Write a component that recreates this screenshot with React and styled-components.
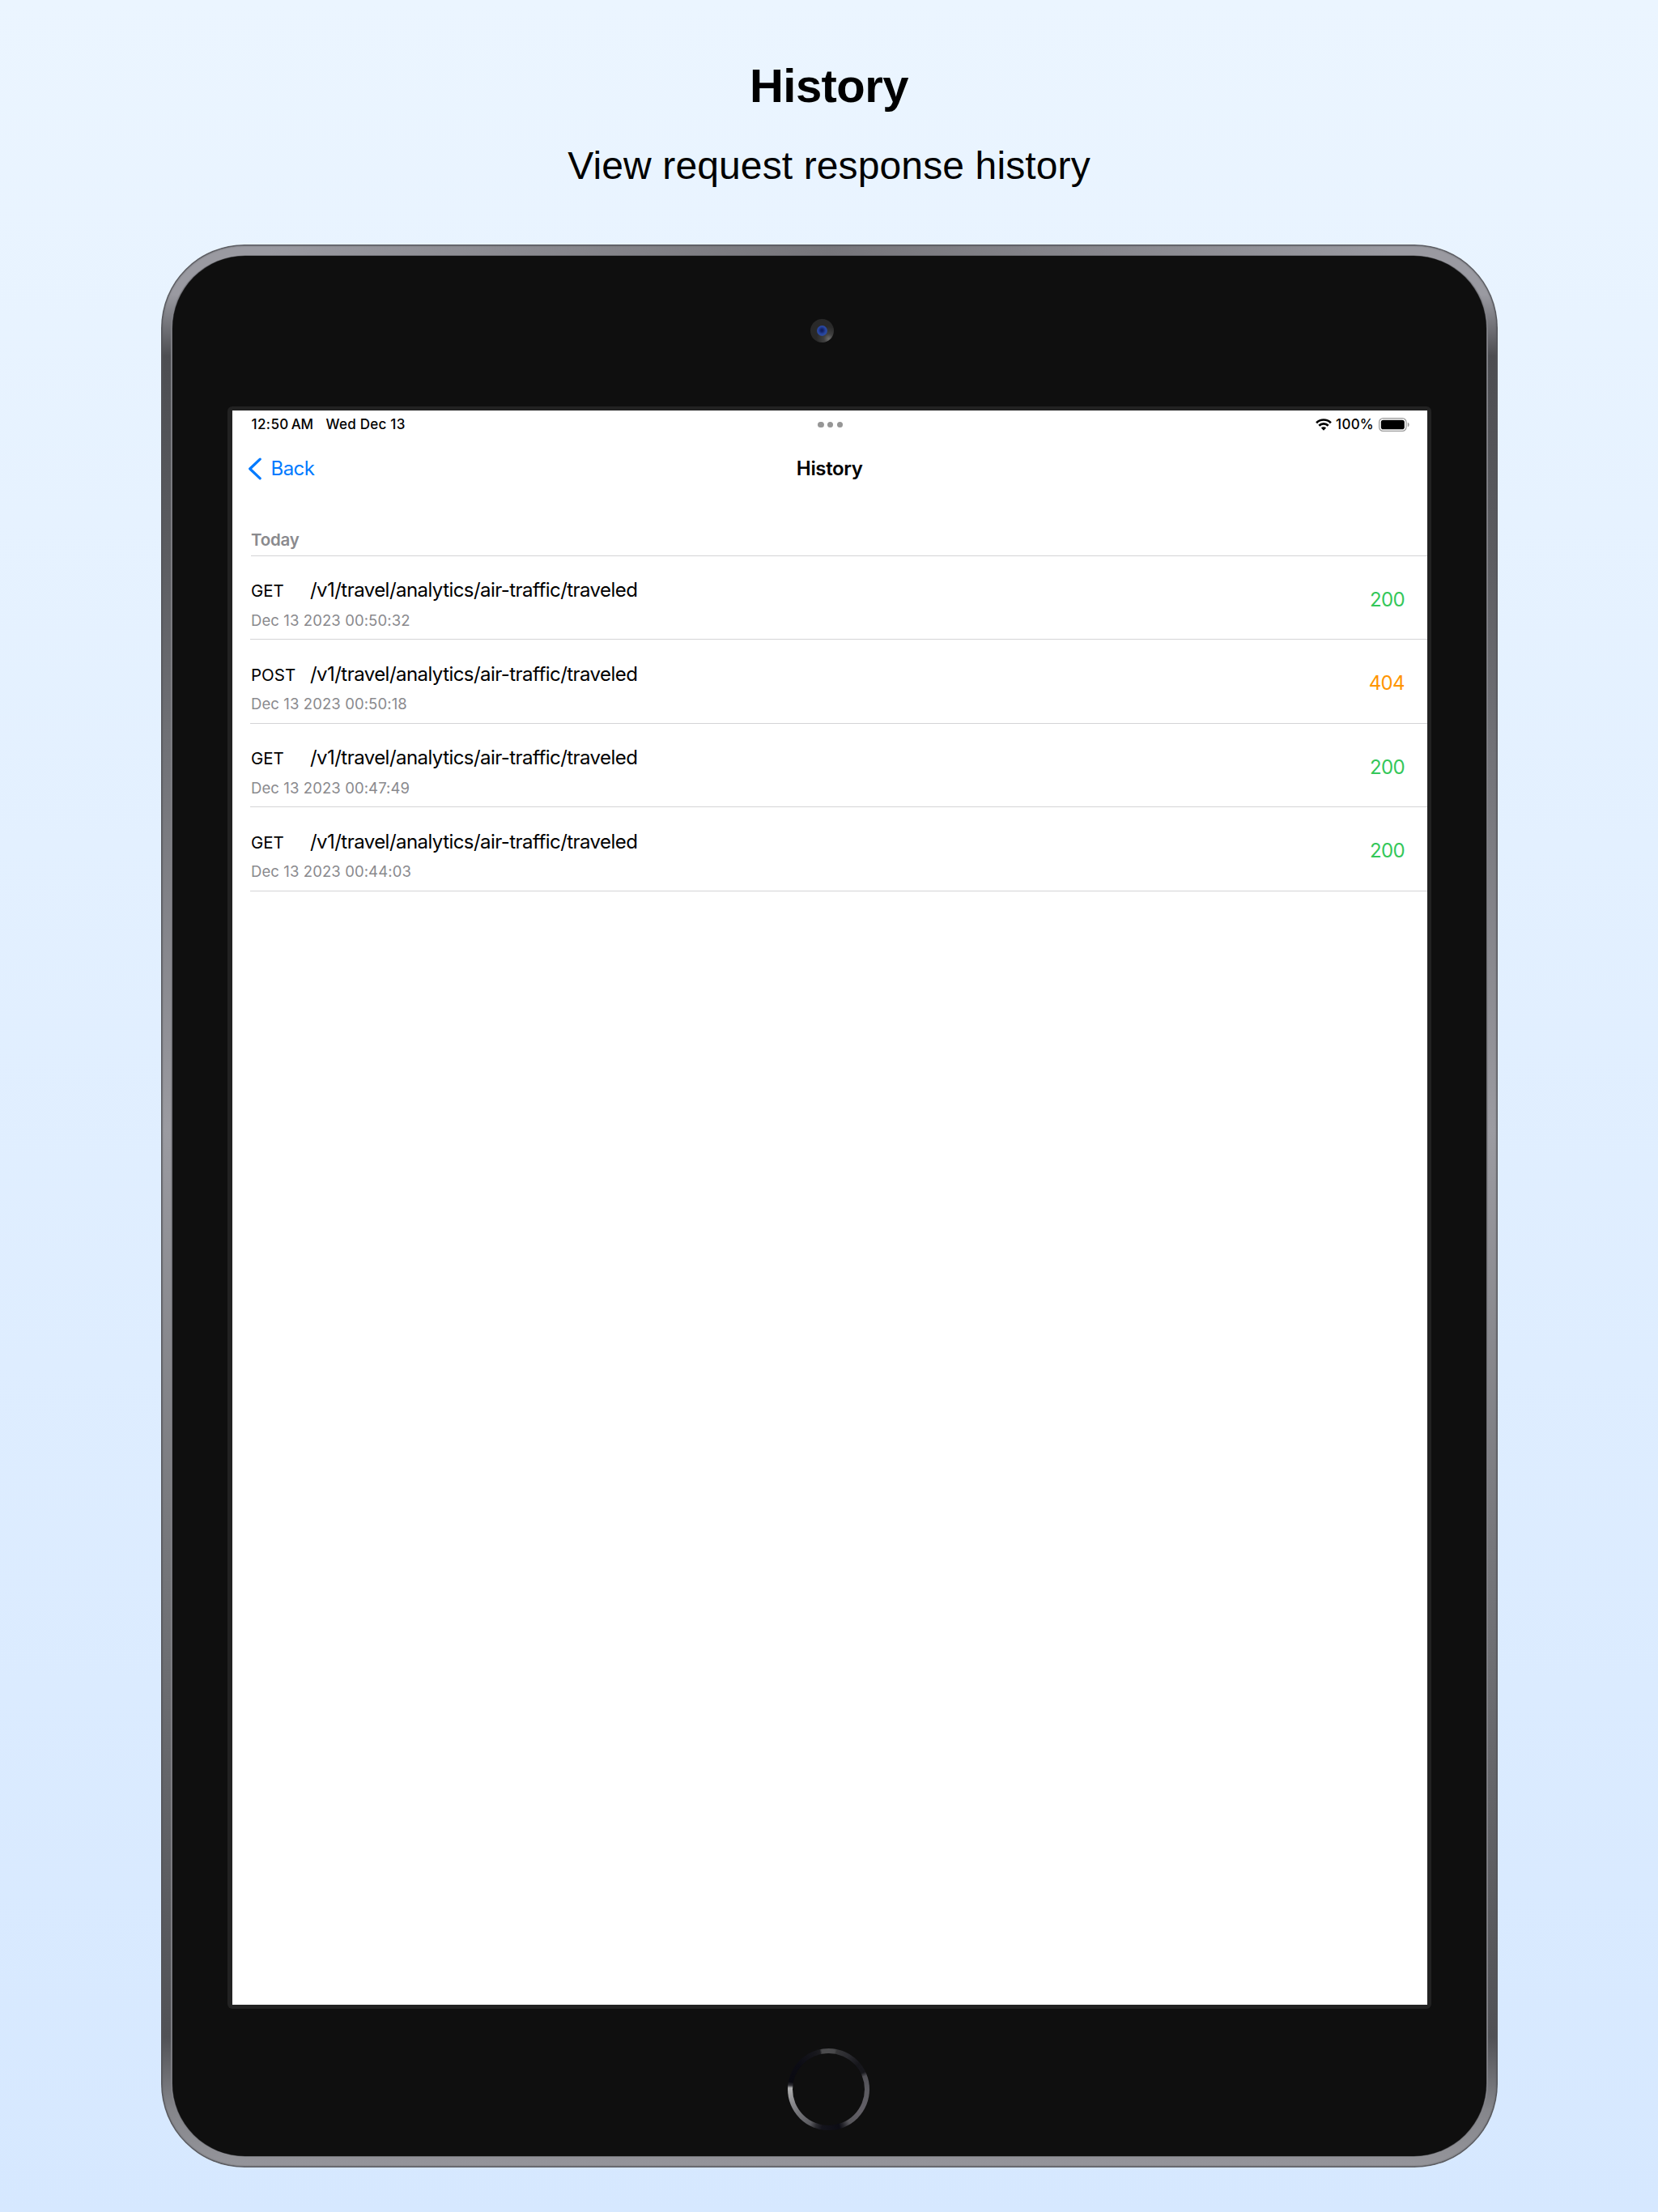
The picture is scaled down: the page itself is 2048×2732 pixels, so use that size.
import React from 'react';
import styled, { createGlobalStyle, css } from 'styled-components';

const GlobalStyle = createGlobalStyle`
  * { box-sizing: border-box; }
  body { margin: 0; background: #d6e8ff; }
`;

const Page = styled.main`
  width: 2048px;
  height: 2732px;
  overflow: hidden;
  display: flex;
  flex-direction: column;
  background: linear-gradient(180deg, #ebf5ff 0%, #d6e8ff 100%);
  color: #000;
`;

const Header = styled.header`
  height: 302px;
  flex: none;
  padding-top: 76px;
  display: flex;
  flex-direction: column;
  align-items: center;
  gap: 39px;
  font-family: "Liberation Sans", Arial, sans-serif;
`;

const Headline = styled.h1`
  margin: 0;
  font-size: 58px;
  line-height: 60px;
  font-weight: 700;
  letter-spacing: -0.55px;
`;

const Tagline = styled.p`
  margin: 0;
  font-size: 48px;
  line-height: 60px;
  letter-spacing: 0.12px;
`;

const Frame = styled.section`
  width: 1651px;
  height: 2375px;
  flex: none;
  margin-left: 199px;
  padding: 14px;
  border-radius: 103px;
  background:
    linear-gradient(90deg, #77767b00 8%, #77767b 50%, #77767b00 92%) top / 100% 14px no-repeat,
    linear-gradient(180deg, #9a9aa1 0%, #9a9aa1 2.6%, #4c4d51 5.8%, #5b5c60 16%, #707176 26%, #9b9ba1 46%, #77787c 67%, #505155 93.2%, #85868b 97%, #95959b 100%);
  box-shadow: inset 0 0 0 1.5px #4f5055cc, inset 0 0 1px 2.5px #5f606540;
`;

const Glass = styled.div`
  width: 100%;
  height: 100%;
  border-radius: 90px;
  background: #0f0f0f;
  box-shadow: 0 0 0 0.5px #55565a, -2px 0 0 0 #85858b, 2px 0 0 0 #85858b;
  display: flex;
  flex-direction: column;
  align-items: center;
`;

const CameraArea = styled.div`
  height: 186px;
  width: 100%;
  padding: 0 18px 2px 0;
  display: flex;
  align-items: center;
  justify-content: center;
`;

const Camera = styled.div`
  width: 29px;
  height: 29px;
  padding: 8px;
  border-radius: 50%;
  background:
    radial-gradient(circle at 78% 84%, #6b6b6b 0%, #55555580 18%, #33333300 46%),
    #292929;
`;

const Lens = styled.div`
  width: 13px;
  height: 13px;
  border-radius: 50%;
  background: radial-gradient(circle at 48% 46%, #101c55 0%, #14246a 18%, #2745a0 48%, #2c4a9a 70%, #1c2c60 100%);
`;

const Bezel = styled.div`
  width: 1487px;
  height: 1979px;
  flex: none;
  padding: 5px 5px 5px 6px;
  border-radius: 6px;
  background: #222;
`;

const HomeArea = styled.div`
  flex: 1;
  width: 100%;
  padding: 16px 2px 0 0;
  display: flex;
  align-items: center;
  justify-content: center;
`;

const HomeRing = styled.div`
  width: 101px;
  height: 101px;
  padding: 6px;
  border-radius: 50%;
  background: conic-gradient(
    #4b4b4d 0deg, #49494b 9deg, #363638 12deg, #2a2a2f 30deg, #16161b 50deg, #17171c 64deg,
    #515056 70deg, #5d5c62 95deg, #625f66 125deg, #57565b 148deg, #24242a 158deg, #0c0c14 164deg,
    #14141c 190deg, #2c2c31 199deg, #5b5b60 208deg, #77777b 235deg, #929295 255deg, #b0b0b0 272deg,
    #333338 276deg, #0a0a11 281deg, #0c0c14 310deg, #17171c 340deg, #1c1c20 347deg, #4b4b4d 350deg, #4b4b4d 360deg
  );
`;

const HomeKey = styled.div`
  width: 100%;
  height: 100%;
  border-radius: 50%;
  background: #0f0f0f;
`;

const Screen = styled.div`
  width: 100%;
  height: 100%;
  background: #fff;
  font-family: Inter, Roboto, sans-serif;
  overflow: hidden;
`;

const threeColumns = css`
  display: grid;
  grid-template-columns: 1fr auto 1fr;
  align-items: center;
`;

const StatusBar = styled.div`
  ${threeColumns}
  height: 35px;
  padding: 0 22px 0 23.5px;
  font-size: 17px;
  font-weight: 500;
  line-height: 35px;
  letter-spacing: 0.25px;
`;

const StatusGroup = styled.div`
  display: flex;
  align-items: center;
  justify-content: ${(p) => (p.$end ? 'flex-end' : 'flex-start')};
`;

const Clock = styled.span`
  letter-spacing: 0.4px;
  margin-right: 3px;
`;

const Meridiem = styled.span`
  letter-spacing: -0.1px;
  margin-right: 15.5px;
`;

const Charge = styled.span`
  margin: 0 6px 0 5.5px;
`;

const Dots = styled.div`
  display: flex;
  gap: 4.2px;
`;

const Dot = styled.i`
  width: 7.4px;
  height: 7.4px;
  border-radius: 50%;
  background: #969696;
`;

const NavBar = styled.nav`
  ${threeColumns}
  height: 73px;
  padding: 0 19px 0 18.5px;
  font-size: 24px;
  line-height: 73px;
`;

const BackLink = styled.a`
  display: flex;
  align-items: center;
  gap: 11px;
  color: #007aff;
  letter-spacing: -0.55px;
`;

const NavTitle = styled.h2`
  margin: 0;
  font-size: 24px;
  font-weight: 600;
  letter-spacing: -0.35px;
`;

const SectionTitle = styled.h3`
  margin: 0 0 0 23px;
  padding: 37px 0 3.7px;
  border-bottom: 1px solid #d4d4d6;
  color: #8a8a8e;
  font-size: 20.5px;
  line-height: 30px;
  font-weight: 600;
  letter-spacing: -0.2px;
`;

const List = styled.ul`
  list-style: none;
  margin: 0;
  padding: 0 0 0 22px;
`;

const Row = styled.li`
  height: 103.55px;
  padding: 28.5px 28px 0 1px;
  border-bottom: 1px solid #d4d4d6;
  display: flex;
  justify-content: space-between;
`;

const Request = styled.div`
  display: flex;
  flex-direction: column;
  gap: 10.5px;
`;

const RequestLine = styled.div`
  height: 28px;
  display: flex;
  align-items: baseline;
`;

const Method = styled.span`
  width: 73px;
  font-size: 20.5px;
  line-height: 24px;
`;

const Path = styled.span`
  font-size: 24px;
  line-height: 28px;
  letter-spacing: -0.55px;
`;

const Timestamp = styled.time`
  color: #8a8a8e;
  font-size: 18.5px;
  line-height: 24px;
  letter-spacing: 0.1px;
`;

const StatusCode = styled.span`
  margin-top: 11.5px;
  font-size: 24px;
  line-height: 28px;
  letter-spacing: -0.6px;
  color: ${(p) => (p.$code < 400 ? '#34c759' : '#ff9500')};
`;

const entries = [
  { method: 'GET', time: 'Dec 13 2023 00:50:32', code: 200 },
  { method: 'POST', time: 'Dec 13 2023 00:50:18', code: 404 },
  { method: 'GET', time: 'Dec 13 2023 00:47:49', code: 200 },
  { method: 'GET', time: 'Dec 13 2023 00:44:03', code: 200 },
];

const WifiIcon = () => (
  <svg width="20" height="15" viewBox="0 0 20 15" fill="none" stroke="#000" strokeWidth="2.7">
    <path d="M1.1 5.2a12.6 12.6 0 0 1 17.8 0" />
    <path d="M4.3 8.7a8 8 0 0 1 11.4 0" />
    <path d="M10 14.8 6.9 11.6a4.3 4.3 0 0 1 6.2 0Z" fill="#000" stroke="none" />
  </svg>
);

const BatteryIcon = () => (
  <svg width="38" height="17" viewBox="0 0 38 17">
    <rect x="0.6" y="0.6" width="33.4" height="15.8" rx="4.8" fill="none" stroke="#999" strokeWidth="1.2" />
    <rect x="2.8" y="2.8" width="29" height="11.4" rx="2.8" fill="#000" />
    <path d="M35.8 5.8c2.4.8 2.4 4.6 0 5.4Z" fill="#999" />
  </svg>
);

const ChevronIcon = () => (
  <svg width="18" height="28" viewBox="0 0 18 28" fill="none" stroke="#007aff" strokeWidth="3.2" strokeLinecap="round" strokeLinejoin="round">
    <path d="M15.2 2.2 2.7 14l12.5 11.8" />
  </svg>
);

const HistoryRow = ({ method, time, code }) => (
  <Row>
    <Request>
      <RequestLine>
        <Method>{method}</Method>
        <Path>/v1/travel/analytics/air-traffic/traveled</Path>
      </RequestLine>
      <Timestamp>{time}</Timestamp>
    </Request>
    <StatusCode $code={code}>{code}</StatusCode>
  </Row>
);

export default function App() {
  return (
    <Page>
      <GlobalStyle />
      <Header>
        <Headline>History</Headline>
        <Tagline>View request response history</Tagline>
      </Header>
      <Frame>
        <Glass>
          <CameraArea>
            <Camera><Lens /></Camera>
          </CameraArea>
          <Bezel>
            <Screen>
              <StatusBar>
                <StatusGroup>
                  <Clock>12:50</Clock>
                  <Meridiem>AM</Meridiem>
                  <span>Wed Dec 13</span>
                </StatusGroup>
                <Dots><Dot /><Dot /><Dot /></Dots>
                <StatusGroup $end>
                  <WifiIcon />
                  <Charge>100%</Charge>
                  <BatteryIcon />
                </StatusGroup>
              </StatusBar>
              <NavBar>
                <BackLink><ChevronIcon />Back</BackLink>
                <NavTitle>History</NavTitle>
              </NavBar>
              <SectionTitle>Today</SectionTitle>
              <List>
                {entries.map((entry) => <HistoryRow key={entry.time} {...entry} />)}
              </List>
            </Screen>
          </Bezel>
          <HomeArea>
            <HomeRing><HomeKey /></HomeRing>
          </HomeArea>
        </Glass>
      </Frame>
    </Page>
  );
}
